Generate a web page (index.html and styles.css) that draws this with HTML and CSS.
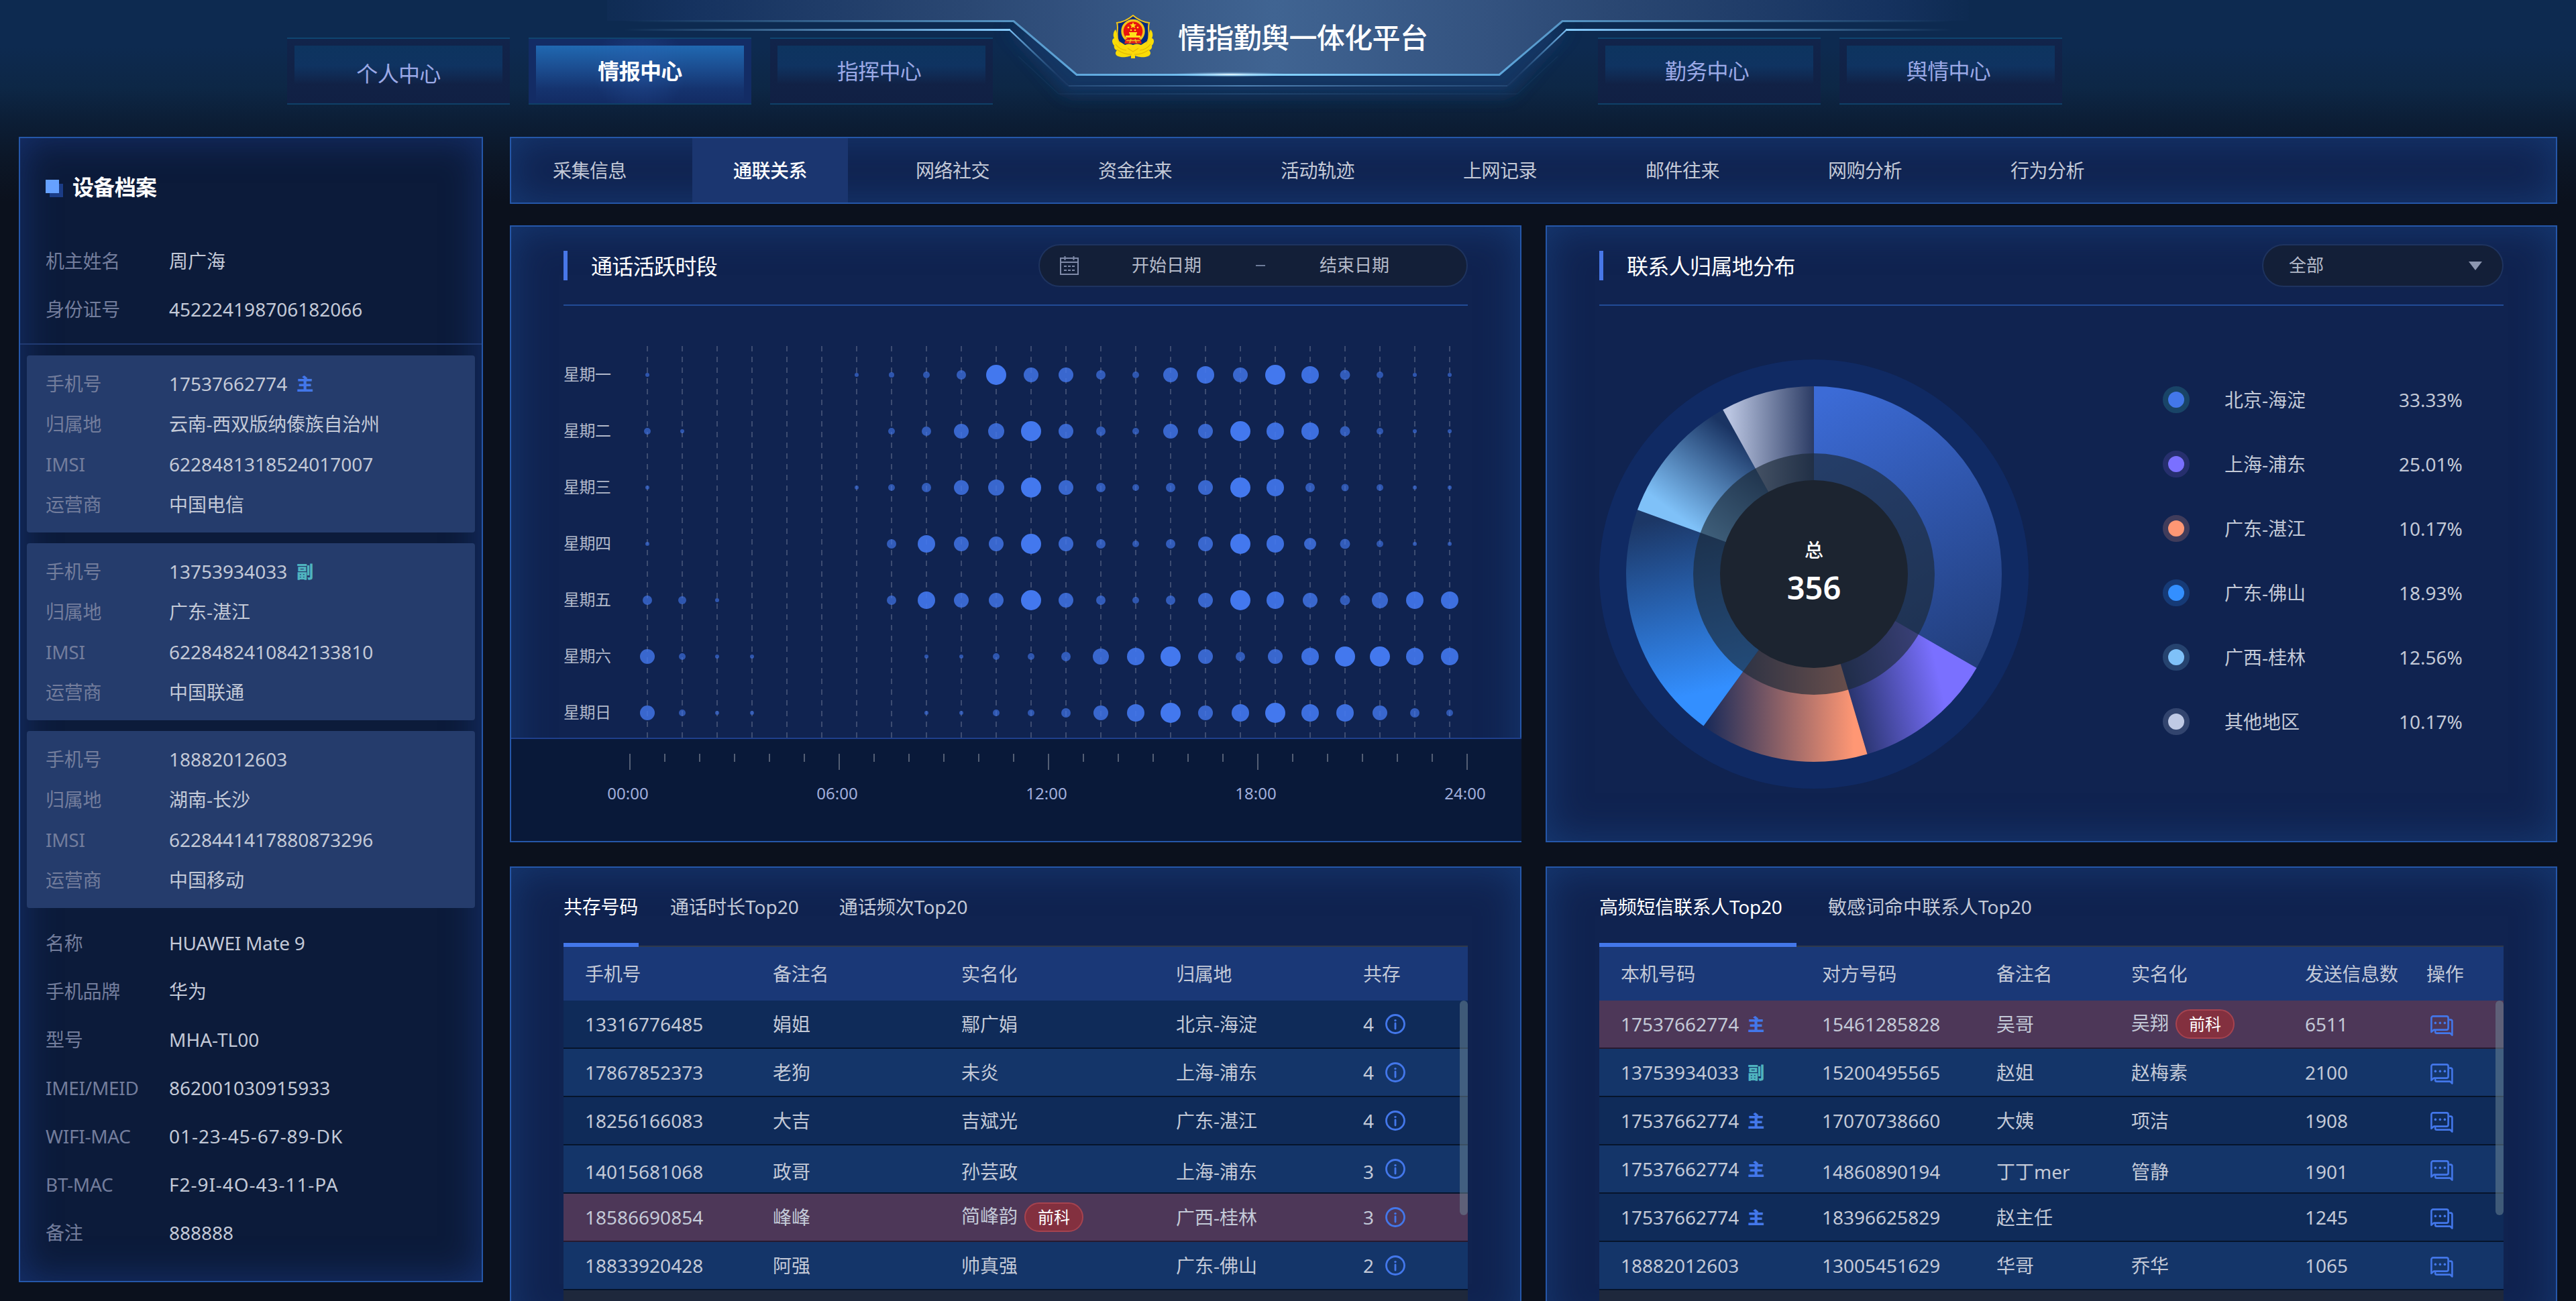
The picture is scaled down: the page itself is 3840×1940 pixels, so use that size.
FILE: index.html
```html
<!DOCTYPE html>
<html lang="zh-CN">
<head>
<meta charset="utf-8">
<title>情指勤舆一体化平台</title>
<link rel="stylesheet" href="styles.css">
</head>
<body>
<svg class="sprite" aria-hidden="true">
  <symbol id="i-info" viewBox="0 0 30 30">
    <circle cx="15" cy="15" r="13.5" fill="none" stroke="#4377ea" stroke-width="2.8"/>
    <circle cx="15" cy="9.6" r="1.7" fill="#4377ea"/>
    <path d="M15 14v8" stroke="#4377ea" stroke-width="2.8" stroke-linecap="round"/>
  </symbol>
  <symbol id="i-chat" viewBox="0 0 34 31">
    <g fill="none" stroke="#4377ea" stroke-width="2.6" stroke-linejoin="round" stroke-linecap="round">
      <path d="M1.4 24.8V4a2.6 2.6 0 0 1 2.6-2.6h20a2.6 2.6 0 0 1 2.6 2.6v15a2.6 2.6 0 0 1-2.6 2.6H5.2z"/>
      <path d="M29 6.6h1a2.4 2.4 0 0 1 2.4 2.4v20.6l-3-3H9.4a2.2 2.2 0 0 1-2.2-2.2v-.6"/>
    </g>
    <g fill="#4377ea"><circle cx="7.4" cy="11.4" r="1.8"/><circle cx="14.4" cy="11.4" r="1.8"/><circle cx="21.4" cy="11.4" r="1.8"/></g>
  </symbol>
</svg>

<header class="header">
  <svg class="header-art" viewBox="0 0 3840 204" width="3840" height="204" aria-hidden="true">
    <defs>
      <linearGradient id="plate" gradientUnits="userSpaceOnUse" x1="905" x2="2935" y1="0" y2="0">
        <stop offset="0" stop-color="#15315e" stop-opacity="0.3"/><stop offset=".06" stop-color="#15325f"/>
        <stop offset=".27" stop-color="#2b4873"/><stop offset=".35" stop-color="#33527f"/><stop offset=".49" stop-color="#406492"/>
        <stop offset=".65" stop-color="#33527f"/><stop offset=".73" stop-color="#2b4873"/>
        <stop offset=".94" stop-color="#15325f"/><stop offset="1" stop-color="#15315e" stop-opacity="0.1"/>
      </linearGradient>
      <linearGradient id="line1" gradientUnits="userSpaceOnUse" x1="930" x2="2910" y1="0" y2="0">
        <stop offset="0" stop-color="#5594c4" stop-opacity="0"/><stop offset=".29" stop-color="#5594c4"/>
        <stop offset=".345" stop-color="#5fa8dd"/><stop offset=".5" stop-color="#82d0ff"/><stop offset=".655" stop-color="#5fa8dd"/>
        <stop offset=".71" stop-color="#5594c4"/><stop offset="1" stop-color="#5594c4" stop-opacity="0"/>
      </linearGradient>
      <linearGradient id="line2l" gradientUnits="userSpaceOnUse" x1="930" x2="1505" y1="0" y2="0">
        <stop offset="0" stop-color="#86ccff" stop-opacity="0"/><stop offset="1" stop-color="#86ccff"/>
      </linearGradient>
      <linearGradient id="line2r" gradientUnits="userSpaceOnUse" x1="2910" x2="2335" y1="0" y2="0">
        <stop offset="0" stop-color="#86ccff" stop-opacity="0"/><stop offset="1" stop-color="#86ccff"/>
      </linearGradient>
      <linearGradient id="slope" gradientUnits="userSpaceOnUse" x1="0" x2="0" y1="44" y2="112">
        <stop offset="0" stop-color="#7cc2f6"/><stop offset="1" stop-color="#4a7fb5" stop-opacity="0.1"/>
      </linearGradient>
      <linearGradient id="echo" gradientUnits="userSpaceOnUse" x1="1580" x2="2260" y1="0" y2="0">
        <stop offset="0" stop-color="#5c92c8" stop-opacity=".2"/><stop offset=".4" stop-color="#6aa3d8" stop-opacity=".7"/><stop offset="1" stop-color="#5c92c8" stop-opacity=".2"/>
      </linearGradient>
      <radialGradient id="flare"><stop offset="0" stop-color="#fff"/><stop offset=".3" stop-color="#c9ecff" stop-opacity=".6"/><stop offset="1" stop-color="#82d0ff" stop-opacity="0"/></radialGradient>
      <filter id="soft" x="-10%" y="-20%" width="120%" height="150%"><feGaussianBlur stdDeviation="12"/></filter>
    </defs>
    <path d="M1500 40L1590 142H2250L2340 40Z" fill="#173a6c" filter="url(#soft)" opacity=".75"/>
    <path d="M905 0H2935V31H2329L2235 111H1605L1511 31H905Z" fill="url(#plate)"/>
    <path d="M930 31.5H1511L1605 111.5H2235L2329 31.5H2910" fill="none" stroke="url(#line1)" stroke-width="3"/>
    <path d="M930 43H1506V46H930Z" fill="url(#line2l)"/>
    <path d="M2910 43H2334V46H2910Z" fill="url(#line2r)"/>
    <path d="M1505 44.5L1593 128M2335 44.5L2247 128" fill="none" stroke="url(#slope)" stroke-width="2.4"/>
    <path d="M1593 128H2247" stroke="url(#echo)" stroke-width="2"/>
    <path d="M1518 84L1578 140H2262L2322 84" fill="none" stroke="url(#echo)" stroke-width="1.5" opacity=".35"/>
    <ellipse cx="1834" cy="111" rx="90" ry="4" fill="url(#flare)"/>
  </svg>
  <nav class="nav nav-left">
    <a class="nav-btn nav-low">个人中心</a>
    <a class="nav-btn active">情报中心</a>
    <a class="nav-btn nudged">指挥中心</a>
  </nav>
  <div class="brand">
    <svg class="emblem" viewBox="0 0 64 67" width="64" height="67" aria-hidden="true">
      <path d="M6 22C2 26 2 32 4 35C0 36 0 42 4 46C3 49 5 52 8 53C5 56 5 60 10 62C18 65 26 62 29 61V65H35V61C38 62 46 65 54 62C59 60 59 56 56 53C59 52 61 49 60 46C64 42 64 36 60 35C62 32 62 26 58 22L50 44L32 54L14 44Z" fill="#f9dc06"/>
      <path d="M8 12C17 11 25 7 32 1C39 7 47 11 56 12C53 19 58 30 54 39C51 46 40 52 32 55C24 52 13 46 10 39C6 30 11 19 8 12Z" fill="#00297f" stroke="#f3c51a" stroke-width="2"/>
      <circle cx="32" cy="24.5" r="16" fill="#e9140e" stroke="#f2c21c" stroke-width="3.4"/>
      <path d="M32 11l1.4 3.3 3.6.2-2.8 2.2 1 3.4-3.2-1.9-3.2 1.9 1-3.4-2.8-2.2 3.6-.2z" fill="#ffe11a"/>
      <g fill="#ffe11a"><circle cx="25" cy="19" r="1.3"/><circle cx="39" cy="19" r="1.3"/><circle cx="29" cy="23" r="1.3"/><circle cx="35" cy="23" r="1.3"/>
      <path d="M26 26h12v2h-1v3h6v3H21v-3h6v-3h-1z"/></g>
      <path d="M21 36H43L45 43H19Z" fill="#e2231a"/>
      <path d="M22 38.5h20M29 36l-2 6M35 36l2 6" stroke="#f2c21c" stroke-width="1.4"/>
      <path d="M20 45q6-3 12 0q6-3 12 0l8-5c-1 12-12 19-20 21c-8-2-19-9-20-21z" fill="#fbd90b"/>
      <path d="M8 52q12 8 22 7M56 52q-12 8-22 7M6 44q6 8 16 9M58 44q-6 8-16 9M24 50l8 5 8-5" fill="none" stroke="#e3b505" stroke-width="1.2"/>
    </svg>
    <h1>情指勤舆一体化平台</h1>
  </div>
  <nav class="nav nav-right">
    <a class="nav-btn nudged">勤务中心</a>
    <a class="nav-btn nudged">舆情中心</a>
  </nav>
</header>

<main class="main">
  <aside class="panel profile">
    <h2 class="profile-title"><i class="mark"></i>设备档案</h2>
    <dl class="rows owner">
      <div><dt>机主姓名</dt><dd>周广海</dd></div>
      <div><dt>身份证号</dt><dd>452224198706182066</dd></div>
    </dl>
    <dl class="rows card">
      <div><dt>手机号</dt><dd>17537662774<b class="tag main-tag">主</b></dd></div>
      <div><dt>归属地</dt><dd class="cjk">云南-西双版纳傣族自治州</dd></div>
      <div><dt>IMSI</dt><dd>6228481318524017007</dd></div>
      <div><dt>运营商</dt><dd>中国电信</dd></div>
    </dl>
    <dl class="rows card">
      <div><dt>手机号</dt><dd>13753934033<b class="tag sub-tag">副</b></dd></div>
      <div><dt>归属地</dt><dd>广东-湛江</dd></div>
      <div><dt>IMSI</dt><dd>6228482410842133810</dd></div>
      <div><dt>运营商</dt><dd>中国联通</dd></div>
    </dl>
    <dl class="rows card">
      <div><dt>手机号</dt><dd>18882012603</dd></div>
      <div><dt>归属地</dt><dd>湖南-长沙</dd></div>
      <div><dt>IMSI</dt><dd>6228441417880873296</dd></div>
      <div><dt>运营商</dt><dd>中国移动</dd></div>
    </dl>
    <dl class="rows device">
      <div><dt>名称</dt><dd class="model">HUAWEI Mate 9</dd></div>
      <div><dt>手机品牌</dt><dd>华为</dd></div>
      <div><dt>型号</dt><dd>MHA-TL00</dd></div>
      <div><dt>IMEI/MEID</dt><dd>862001030915933</dd></div>
      <div><dt>WIFI-MAC</dt><dd class="mac">01-23-45-67-89-DK</dd></div>
      <div><dt>BT-MAC</dt><dd class="mac">F2-9I-4O-43-11-PA</dd></div>
      <div><dt>备注</dt><dd>888888</dd></div>
    </dl>
  </aside>

  <div class="content">
    <nav class="panel tabs">
      <a>采集信息</a><a class="active">通联关系</a><a>网络社交</a><a>资金往来</a><a>活动轨迹</a><a>上网记录</a><a>邮件往来</a><a>网购分析</a><a>行为分析</a>
    </nav>

    <section class="panel activity">
      <div class="panel-head">
        <h2>通话活跃时段</h2>
        <div class="pill date-range">
          <svg viewBox="0 0 28 28" width="28" height="28" aria-hidden="true">
            <path d="M1 3H27V27H1ZM1 9H27" fill="none" stroke="#7f8aa8" stroke-width="2"/>
            <path d="M7.500 0V6M20.500 0V6" stroke="#7f8aa8" stroke-width="2"/>
            <path d="M6 15h4M12 15h4M18 15h4M6 21h4M12 21h4M18 21h4" stroke="#7f8aa8" stroke-width="2"/>
          </svg>
          <span>开始日期</span><i class="dash"></i><span>结束日期</span>
        </div>
      </div>
      <div class="bubble">
        <ul class="days"><li>星期一</li><li>星期二</li><li>星期三</li><li>星期四</li><li>星期五</li><li>星期六</li><li>星期日</li></ul>
        <svg id="bubbles" width="1248" height="584" viewBox="0 0 1248 584"></svg>
      </div>
      <div class="axis">
        <svg id="ticks" width="1250" height="24" viewBox="0 0 1250 24"></svg>
        <div class="hours"><span>00:00</span><span>06:00</span><span>12:00</span><span>18:00</span><span>24:00</span></div>
      </div>
    </section>

    <section class="panel region">
      <div class="panel-head">
        <h2>联系人归属地分布</h2>
        <div class="pill select"><span>全部</span><i class="caret"></i></div>
      </div>
      <div class="region-body">
        <svg class="donut" width="640" height="640" viewBox="-320 -320 640 640">
          <defs>
            <linearGradient id="s1" gradientUnits="userSpaceOnUse" x1="20" y1="-270" x2="240" y2="140"><stop offset="0" stop-color="#3c6bd6"/><stop offset="1" stop-color="#213d7a"/></linearGradient>
            <linearGradient id="s2" gradientUnits="userSpaceOnUse" x1="60" y1="200" x2="190" y2="170"><stop offset="0" stop-color="#2b3672"/><stop offset="1" stop-color="#7a70ff"/></linearGradient>
            <linearGradient id="s3" gradientUnits="userSpaceOnUse" x1="-160" y1="0" x2="60" y2="0"><stop offset="0" stop-color="#1b2b59"/><stop offset="1" stop-color="#ff9774"/></linearGradient>
            <linearGradient id="s4" gradientUnits="userSpaceOnUse" x1="-240" y1="-80" x2="-180" y2="180"><stop offset="0" stop-color="#1c3766"/><stop offset="1" stop-color="#338fff"/></linearGradient>
            <linearGradient id="s5" gradientUnits="userSpaceOnUse" x1="-130" y1="-220" x2="-220" y2="-100"><stop offset="0" stop-color="#1a3463"/><stop offset="1" stop-color="#7fc1f8"/></linearGradient>
            <linearGradient id="s6" gradientUnits="userSpaceOnUse" x1="-125" y1="0" x2="0" y2="0"><stop offset="0" stop-color="#b9c4e0"/><stop offset="1" stop-color="#2b3b64"/></linearGradient>
          </defs>
          <circle r="320" fill="#102a63"/>
          <g id="slices"></g>
          <circle r="180" fill="#1c2936" fill-opacity=".65"/>
          <circle r="140" fill="#1c2430"/>
          <text class="donut-label" y="-25">总</text>
          <text class="donut-value" y="38">356</text>
        </svg>
        <ul class="legend">
          <li><i class="dot d1"></i><span>北京-海淀</span><em>33.33%</em></li>
          <li><i class="dot d2"></i><span>上海-浦东</span><em>25.01%</em></li>
          <li><i class="dot d3"></i><span>广东-湛江</span><em>10.17%</em></li>
          <li><i class="dot d4"></i><span>广东-佛山</span><em>18.93%</em></li>
          <li><i class="dot d5"></i><span>广西-桂林</span><em>12.56%</em></li>
          <li><i class="dot d6"></i><span>其他地区</span><em>10.17%</em></li>
        </ul>
      </div>
    </section>

    <section class="panel list">
      <div class="list-tabs calls"><a class="active">共存号码</a><a>通话时长Top20</a><a>通话频次Top20</a></div>
      <div class="table t-calls">
        <div class="tr th"><span>手机号</span><span>备注名</span><span>实名化</span><span>归属地</span><span>共存</span></div>
        <div class="tbody">
          <div class="tr"><span>13316776485</span><span>娟姐</span><span>鄢广娟</span><span>北京-海淀</span><span>4<svg class="info"><use href="#i-info"/></svg></span></div>
          <div class="tr"><span>17867852373</span><span>老狗</span><span>未炎</span><span>上海-浦东</span><span>4<svg class="info"><use href="#i-info"/></svg></span></div>
          <div class="tr"><span>18256166083</span><span>大吉</span><span>吉斌光</span><span>广东-湛江</span><span>4<svg class="info"><use href="#i-info"/></svg></span></div>
          <div class="tr"><span class="low">14015681068</span><span class="low">政哥</span><span class="low">孙芸政</span><span class="low">上海-浦东</span><span><span class="low">3</span><svg class="info"><use href="#i-info"/></svg></span></div>
          <div class="tr alert"><span>18586690854</span><span>峰峰</span><span class="named"><span>简峰韵</span><b class="badge">前科</b></span><span>广西-桂林</span><span>3<svg class="info"><use href="#i-info"/></svg></span></div>
          <div class="tr"><span>18833920428</span><span>阿强</span><span>帅真强</span><span>广东-佛山</span><span>2<svg class="info"><use href="#i-info"/></svg></span></div>
          <i class="scrollbar"></i>
        </div>
      </div>
    </section>

    <section class="panel list">
      <div class="list-tabs sms"><a class="active">高频短信联系人Top20</a><a>敏感词命中联系人Top20</a></div>
      <div class="table t-sms">
        <div class="tr th"><span>本机号码</span><span>对方号码</span><span>备注名</span><span>实名化</span><span>发送信息数</span><span>操作</span></div>
        <div class="tbody">
          <div class="tr alert"><span>17537662774<b class="tag main-tag">主</b></span><span>15461285828</span><span>吴哥</span><span class="named"><span>吴翔</span><b class="badge">前科</b></span><span>6511</span><span><svg class="chat"><use href="#i-chat"/></svg></span></div>
          <div class="tr"><span>13753934033<b class="tag sub-tag">副</b></span><span>15200495565</span><span>赵姐</span><span>赵梅素</span><span>2100</span><span><svg class="chat"><use href="#i-chat"/></svg></span></div>
          <div class="tr"><span>17537662774<b class="tag main-tag">主</b></span><span>17070738660</span><span>大姨</span><span>项洁</span><span>1908</span><span><svg class="chat"><use href="#i-chat"/></svg></span></div>
          <div class="tr"><span>17537662774<b class="tag main-tag">主</b></span><span class="low">14860890194</span><span class="low">丁丁mer</span><span class="low">管静</span><span class="low">1901</span><span><svg class="chat"><use href="#i-chat"/></svg></span></div>
          <div class="tr"><span>17537662774<b class="tag main-tag">主</b></span><span>18396625829</span><span>赵主任</span><span></span><span>1245</span><span><svg class="chat"><use href="#i-chat"/></svg></span></div>
          <div class="tr"><span>18882012603</span><span>13005451629</span><span>华哥</span><span>乔华</span><span>1065</span><span><svg class="chat"><use href="#i-chat"/></svg></span></div>
          <i class="scrollbar"></i>
        </div>
      </div>
    </section>
  </div>
</main>
<script src="charts.js"></script>
</body>
</html>
```
FILE: styles.css
```css
* { box-sizing: border-box; }
html, body { margin: 0; height: 1940px; overflow: hidden; }
body {
  width: 3840px;
  font-family: "Noto Sans", "Noto Sans CJK SC", sans-serif;
  font-size: 28px;
  line-height: 40px;
  color: #c3c9d7;
  background: linear-gradient(180deg, #0d2a50 0, #0d2a50 70px, #0d2746 130px, #0c1e36 180px, #0c1728 235px, #0b111d 300px) #0b111d;
}
h1, h2, dl, dd, ul { margin: 0; padding: 0; }
h1, h2 { font-weight: 500; }
ul { list-style: none; }
.sprite { position: absolute; width: 0; height: 0; }

/* Header */
.header {
  position: relative;
  display: grid;
  grid-template-columns: 1657px 725px 1fr;
  height: 204px;
}
.header-art { position: absolute; left: 0; top: 0; }
.nav, .brand { position: relative; display: flex; }
.nav { gap: 28px; padding-top: 56px; }
.nav-left { padding-left: 428px; }
.nav-btn {
  display: flex;
  justify-content: center;
  width: 332px;
  height: 100px;
  padding-top: 28px;
  border-top: 2px solid #0f4570;
  border-bottom: 2px solid #0f4068;
  background:
    linear-gradient(180deg, #0d345f 0, #0f3361 30px, rgba(17, 33, 72, 0) 58px) 50% 10px / 310px 60px no-repeat,
    linear-gradient(180deg, #11244b, #112246 60%, #112044);
  color: #9ba9e6;
  font-size: 32px;
  letter-spacing: -.02em;
}
.nav-low { padding-top: 32px; }
.nudged { padding-right: 7px; }
.nav-btn.active {
  background:
    radial-gradient(circle at 50% 45px, rgba(44, 96, 180, .35), rgba(44, 96, 180, 0) 70px),
    linear-gradient(180deg, #2068b1 0, #1b4c8f 35px, #15336e 65px, rgba(19, 43, 99, 0) 84px) 50% 10px / 310px 84px no-repeat,
    #132c65;
  color: #fff;
  font-weight: 700;
}
.brand { align-items: flex-start; gap: 35px; padding-top: 22px; }
.brand h1 {
  margin-top: 4px;
  color: #fff;
  font-size: 42px;
  line-height: 60px;
  letter-spacing: -.015em;
}

/* Page frame */
.main { display: flex; align-items: flex-start; gap: 40px; padding: 0 28px; }
.content {
  display: grid;
  grid-template-columns: 1508px 1508px;
  grid-template-rows: 100px 920px 700px;
  column-gap: 36px;
  row-gap: 32px;
}
.list { margin-top: 4px; }
.panel {
  border: 2px solid #2557a9;
  background: #102350;
  box-shadow: inset 0 0 60px rgba(28, 76, 146, .55);
}

/* Device profile */
.profile { width: 692px; height: 1708px; background: #0c1b3a; box-shadow: inset 0 0 56px rgba(30, 66, 150, .58); }
.profile-title {
  display: flex;
  align-items: center;
  gap: 20px;
  height: 52px;
  margin: 47px 0 0 38px;
  color: #fff;
  font-size: 32px;
  font-weight: 700;
  letter-spacing: -.02em;
}
.mark {
  width: 20px;
  height: 20px;
  margin-bottom: 3px;
  background: #66a1ff;
  box-shadow: 6px 6px #1b3c86;
}
.rows > div { display: flex; align-items: center; padding-left: 38px; height: 72px; }
.rows dt { width: 184px; color: #737d9c; letter-spacing: -.01em; }
.rows dd { display: flex; align-items: center; }
.cjk { letter-spacing: -.01em; }
.rows .model { display: block; letter-spacing: -.3px; }
.mac { letter-spacing: .95px; }
.owner { padding: 48px 0 15px; border-bottom: 2px solid #203a72; }
.card {
  margin: 16px 10px;
  padding: 12px 0;
  border-radius: 4px;
  background: #253c6c;
}
.card > div { height: 60px; padding-left: 28px; }
.device { padding-top: 0; }
.tag { margin: 0 0 0 14px; font-size: 25px; line-height: 32px; font-weight: 900; }
.main-tag { color: #4377ea; }
.sub-tag { color: #4fb3bf; }

/* Section tabs */
.tabs { grid-column: 1 / 3; display: flex; gap: 40px; letter-spacing: -.02em; }
.tabs a { display: flex; align-items: center; justify-content: center; width: 232px; }
.tabs a:first-child { width: 230px; padding-left: 4px; }
.tabs .active { background: #1b3670; color: #fff; font-weight: 500; }

/* Panel headings */
.panel-head {
  display: flex;
  align-items: center;
  justify-content: space-between;
  height: 118px;
  margin: 0 78px;
  border-bottom: 2px solid #224b97;
}
.panel-head h2 {
  height: 44px;
  padding-left: 35px;
  border-left: 6px solid #4877e8;
  color: #fff;
  font-size: 32px;
  font-weight: 400;
  line-height: 45px;
  letter-spacing: -.02em;
}
.pill {
  display: flex;
  align-items: center;
  height: 64px;
  border: 2px solid #1e335f;
  border-radius: 32px;
  background: #131f38;
  color: #b4bac9;
  font-size: 26px;
}
.pill span { margin-top: -2px; }
.date-range { width: 640px; padding-left: 30px; }
.date-range span { width: 104px; }
.date-range svg { margin-right: 79px; }
.dash { width: 14px; height: 2px; margin: 0 81px; background: #6e7c9a; }
.select { width: 360px; justify-content: space-between; padding: 0 30px 0 38px; }
.caret {
  border: 10px solid transparent;
  border-top: 13px solid #8c96b0;
  border-bottom: 0;
}

/* Hourly activity */
.activity { display: flex; flex-direction: column; }
.activity .panel-head, .region .panel-head { flex: none; }
.bubble { display: flex; height: 644px; padding: 60px 0 0 78px; }
.days { width: 98px; margin-top: 20px; color: #b2b9cb; font-size: 24px; letter-spacing: -.02em; }
.days li { height: 84px; line-height: 44px; }
.axis {
  height: 156px;
  margin-right: -2px;
  border-top: 2px solid #1f3f8b;
  background: #091939;
}
.axis svg { display: block; margin: 22px 0 0 176px; }
.hours { display: flex; margin: 15px 0 0 18px; color: #a0aedb; font-size: 24px; }
.hours span { flex: 0 0 312px; text-align: center; }

/* Region share */
.region-body { display: flex; }
.donut { margin: 80px 0 0 78px; flex: none; }
.donut text { fill: #fff; text-anchor: middle; }
.donut-label { font-size: 28px; font-weight: 500; }
.donut-value { font-size: 47px; font-weight: 600; }
.legend { margin: 92px 0 0 200px; }
.legend li { display: flex; align-items: center; height: 96px; }
.legend span { width: 260px; }
.legend em { font-style: normal; }
.dot { width: 40px; height: 40px; margin-right: 52px; border: 8px solid; border-radius: 50%; }
.d1 { background: #4377ea; border-color: #194467; }
.d2 { background: #7a70ff; border-color: #262f6d; }
.d3 { background: #ff9774; border-color: #403c5b; }
.d4 { background: #338fff; border-color: #163a76; }
.d5 { background: #7fc1f8; border-color: #26436f; }
.d6 { background: #bfc9e4; border-color: #32446e; }

/* Contact lists */
.list-tabs {
  display: flex;
  height: 118px;
  margin: 0 78px;
  border-bottom: 2px solid #2f394b;
}
.list-tabs a { height: 118px; padding-top: 38px; white-space: nowrap; }
.list-tabs .active { border-bottom: 6px solid #4377ea; color: #fff; letter-spacing: -.01em; }
.calls .active { width: 112px; margin-right: 47px; }
.calls a + a { margin-right: 60px; }
.sms .active { width: 294px; margin-right: 47px; }
.table { margin: 0 78px; }
.tr { display: grid; align-items: center; height: 72px; padding-left: 32px; border-bottom: 2px solid #06142b; background: #0f2b59; }
.tr > span { display: flex; align-items: center; }
.t-calls .tr { grid-template-columns: 280px 281px 320px 279px 1fr; }
.t-sms .tr { grid-template-columns: 300px 260px 201px 259px 181px 1fr; }
.th.tr { height: 80px; border: 0; background: #1a3877; letter-spacing: -.01em; }
.tbody { position: relative; height: 460px; background: #1e283c; }
.tbody .tr:nth-child(even) { background: #143569; }
.tbody .tr.alert { background: #4d3758; border-color: #271a30; }
.tr .low { position: relative; top: 4px; }
.named > span { position: relative; top: -2px; }
.info { width: 30px; height: 30px; margin-left: 17px; }
.chat { width: 34px; height: 31px; margin: 4px 0 0 6px; }
.badge {
  width: 88px;
  height: 44px;
  margin-left: 10px;
  border: 2px solid #a6434f;
  border-radius: 22px;
  background: #83303f;
  color: #fff;
  font-size: 24px;
  font-weight: 400;
  line-height: 39px;
  text-align: center;
}
.table .tag { margin-left: 13px; }
.scrollbar {
  position: absolute;
  right: 0;
  top: 0;
  width: 12px;
  height: 320px;
  border-radius: 6px;
  background: rgba(112, 137, 151, .5);
}
```
FILE: charts.js
```js
const NS = "http://www.w3.org/2000/svg";
function add(parent, name, attrs) {
  const el = document.createElementNS(NS, name);
  for (const key in attrs) el.setAttribute(key, attrs[key]);
  parent.appendChild(el);
}

// Call volume per weekday and hour, as bubble diameters.
const volume = [
  [6,0,0,0,0,0,6,8,10,14,30,22,22,14,10,22,26,22,30,26,15,10,6,6],
  [10,6,0,0,0,0,0,10,14,22,24,30,22,14,10,22,22,30,26,26,15,10,6,6],
  [6,0,0,0,0,0,6,10,14,22,24,30,22,14,10,14,22,30,26,14,11,10,6,6],
  [6,0,0,0,0,0,0,14,26,22,22,30,22,14,10,14,22,30,26,18,15,10,6,6],
  [14,12,6,0,0,0,0,14,26,22,22,30,22,14,10,14,22,30,26,22,15,24,26,26],
  [22,10,6,6,0,0,0,0,6,6,10,10,14,24,26,30,22,14,22,26,30,30,26,26],
  [22,10,6,6,0,0,0,0,6,6,10,10,14,22,26,30,22,26,30,26,26,22,14,10]
];
const STEP = 52;
const bubbles = document.getElementById("bubbles");
for (let h = 0; h < 24; h++) {
  const x = 27 + h * STEP;
  add(bubbles, "path", { d: `M${x} 0V584`, stroke: "#fff", "stroke-opacity": .19, "stroke-width": 2, "stroke-dasharray": "8 8" });
}
volume.forEach((row, day) => row.forEach((d, h) => {
  if (!d) return;
  const opacity = d >= 30 ? 1 : d >= 26 ? .9 : d >= 18 ? .8 : d >= 14 ? .68 : .6;
  add(bubbles, "circle", { cx: 27 + h * STEP, cy: 43 + day * 84, r: d / 2, fill: "#4378ee", "fill-opacity": opacity });
}));

const ticks = document.getElementById("ticks");
for (let h = 0; h <= 24; h++) {
  add(ticks, "path", { d: `M${1 + h * STEP} 0v${h % 6 ? 12 : 24}`, stroke: "#fff", "stroke-opacity": .3, "stroke-width": 2 });
}

// Donut slices, clockwise from the top, in degrees.
const bounds = [0, 120, 163.5, 216, 290, 331, 360];
const point = a => [280 * Math.sin(a * Math.PI / 180), -280 * Math.cos(a * Math.PI / 180)].map(v => v.toFixed(2)).join(" ");
const slices = document.getElementById("slices");
for (let i = 0; i < 6; i++) {
  add(slices, "path", { d: `M0 0L${point(bounds[i])}A280 280 0 0 1 ${point(bounds[i + 1])}Z`, fill: `url(#s${i + 1})` });
}
```
